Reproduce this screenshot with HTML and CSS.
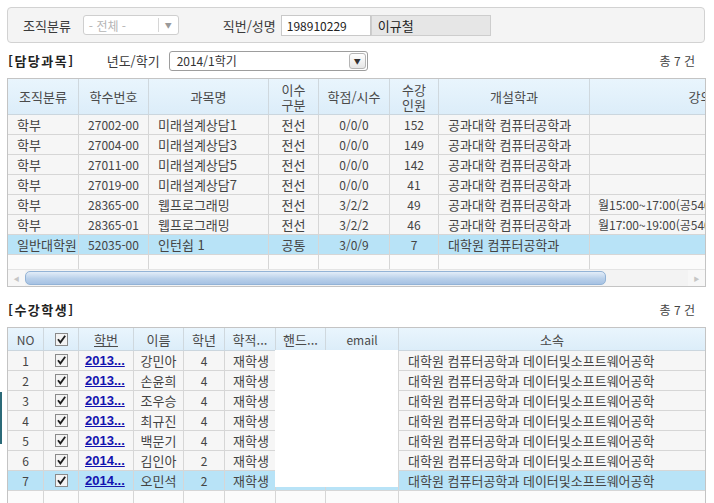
FILE: index.html
```html
<!DOCTYPE html>
<html lang="ko">
<head>
<meta charset="utf-8">
<link rel="stylesheet" href="styles.css">
</head>
<body>
<div class="edge-mark"></div>

<div class="search-panel">
  <span class="lbl">조직분류</span>
  <div class="sel sel-disabled"><span class="sel-text">- 전체 -</span><span class="sel-arrow">▼</span></div>
  <span class="lbl lbl-emp">직번/성명</span>
  <div class="inp">198910229</div>
  <div class="inp inp-name">이규철</div>
</div>

<div class="sec-bar">
  <span class="sec-title">[담당과목]</span>
  <span class="lbl lbl-year">년도/학기</span>
  <div class="sel sel-year"><span class="sel-text">2014/1학기</span><span class="sel-btn">▼</span></div>
  <span class="total">총 7 건</span>
</div>

<div class="grid grid1">
  <div class="clip">
    <div class="row head">
      <div class="c c1">조직분류</div>
      <div class="c c2">학수번호</div>
      <div class="c c3">과목명</div>
      <div class="c c4">이수<br>구분</div>
      <div class="c c5">학점/시수</div>
      <div class="c c6">수강<br>인원</div>
      <div class="c c7">개설학과</div>
      <div class="c c8">강의시간</div>
    </div>
    <div class="row">
      <div class="c c1 l">학부</div><div class="c c2 num">27002-00</div><div class="c c3 l">미래설계상담1</div><div class="c c4">전선</div><div class="c c5 num">0/0/0</div><div class="c c6 num">152</div><div class="c c7 l">공과대학 컴퓨터공학과</div><div class="c c8 l"></div>
    </div>
    <div class="row">
      <div class="c c1 l">학부</div><div class="c c2 num">27004-00</div><div class="c c3 l">미래설계상담3</div><div class="c c4">전선</div><div class="c c5 num">0/0/0</div><div class="c c6 num">149</div><div class="c c7 l">공과대학 컴퓨터공학과</div><div class="c c8 l"></div>
    </div>
    <div class="row">
      <div class="c c1 l">학부</div><div class="c c2 num">27011-00</div><div class="c c3 l">미래설계상담5</div><div class="c c4">전선</div><div class="c c5 num">0/0/0</div><div class="c c6 num">142</div><div class="c c7 l">공과대학 컴퓨터공학과</div><div class="c c8 l"></div>
    </div>
    <div class="row">
      <div class="c c1 l">학부</div><div class="c c2 num">27019-00</div><div class="c c3 l">미래설계상담7</div><div class="c c4">전선</div><div class="c c5 num">0/0/0</div><div class="c c6 num">41</div><div class="c c7 l">공과대학 컴퓨터공학과</div><div class="c c8 l"></div>
    </div>
    <div class="row">
      <div class="c c1 l">학부</div><div class="c c2 num">28365-00</div><div class="c c3 l">웹프로그래밍</div><div class="c c4">전선</div><div class="c c5 num">3/2/2</div><div class="c c6 num">49</div><div class="c c7 l">공과대학 컴퓨터공학과</div><div class="c c8 l">월15:00~17:00(공540</div>
    </div>
    <div class="row">
      <div class="c c1 l">학부</div><div class="c c2 num">28365-01</div><div class="c c3 l">웹프로그래밍</div><div class="c c4">전선</div><div class="c c5 num">3/2/2</div><div class="c c6 num">46</div><div class="c c7 l">공과대학 컴퓨터공학과</div><div class="c c8 l">월17:00~19:00(공540</div>
    </div>
    <div class="row sel-row">
      <div class="c c1 l">일반대학원</div><div class="c c2 num">52035-00</div><div class="c c3 l">인턴쉽 1</div><div class="c c4">공통</div><div class="c c5 num">3/0/9</div><div class="c c6 num">7</div><div class="c c7 l">대학원 컴퓨터공학과</div><div class="c c8 l"></div>
    </div>
    <div class="row empty">
      <div class="c c1"></div><div class="c c2"></div><div class="c c3"></div><div class="c c4"></div><div class="c c5"></div><div class="c c6"></div><div class="c c7"></div><div class="c c8"></div>
    </div>
  </div>
  <div class="hscroll">
    <div class="sb-btn">&#9664;</div>
    <div class="sb-thumb"></div>
    <div class="sb-track"></div>
    <div class="sb-btn">&#9654;</div>
  </div>
</div>

<div class="sec-bar sec-bar2">
  <span class="sec-title">[수강학생]</span>
  <span class="total">총 7 건</span>
</div>

<div class="grid grid2">
  <div class="row head">
    <div class="c d1 num">NO</div>
    <div class="c d2"><svg class="chk" width="13" height="13" viewBox="0 0 13 13"><rect x="0.5" y="0.5" width="12" height="12" fill="#f3f3f3" stroke="#8a8a8a"/><path d="M3 6.3 L5.4 9.4 L10.2 2.8" fill="none" stroke="#1e1e1e" stroke-width="1.8"/></svg></div>
    <div class="c d3"><span class="ul">학번</span></div>
    <div class="c d4">이름</div>
    <div class="c d5">학년</div>
    <div class="c d6">학적...</div>
    <div class="c d7">핸드...</div>
    <div class="c d8 num">email</div>
    <div class="c d9">소속</div>
  </div>
  <div class="row">
    <div class="c d1 num">1</div><div class="c d2"><svg class="chk" width="13" height="13" viewBox="0 0 13 13"><rect x="0.5" y="0.5" width="12" height="12" fill="#f3f3f3" stroke="#8a8a8a"/><path d="M3 6.3 L5.4 9.4 L10.2 2.8" fill="none" stroke="#1e1e1e" stroke-width="1.8"/></svg></div><div class="c d3 l"><span class="link">2013...</span></div><div class="c d4">강민아</div><div class="c d5 num">4</div><div class="c d6 l">재학생</div><div class="c d7"></div><div class="c d8"></div><div class="c d9 l">대학원 컴퓨터공학과 데이터및소프트웨어공학</div>
  </div>
  <div class="row">
    <div class="c d1 num">2</div><div class="c d2"><svg class="chk" width="13" height="13" viewBox="0 0 13 13"><rect x="0.5" y="0.5" width="12" height="12" fill="#f3f3f3" stroke="#8a8a8a"/><path d="M3 6.3 L5.4 9.4 L10.2 2.8" fill="none" stroke="#1e1e1e" stroke-width="1.8"/></svg></div><div class="c d3 l"><span class="link">2013...</span></div><div class="c d4">손윤희</div><div class="c d5 num">4</div><div class="c d6 l">재학생</div><div class="c d7"></div><div class="c d8"></div><div class="c d9 l">대학원 컴퓨터공학과 데이터및소프트웨어공학</div>
  </div>
  <div class="row">
    <div class="c d1 num">3</div><div class="c d2"><svg class="chk" width="13" height="13" viewBox="0 0 13 13"><rect x="0.5" y="0.5" width="12" height="12" fill="#f3f3f3" stroke="#8a8a8a"/><path d="M3 6.3 L5.4 9.4 L10.2 2.8" fill="none" stroke="#1e1e1e" stroke-width="1.8"/></svg></div><div class="c d3 l"><span class="link">2013...</span></div><div class="c d4">조우승</div><div class="c d5 num">4</div><div class="c d6 l">재학생</div><div class="c d7"></div><div class="c d8"></div><div class="c d9 l">대학원 컴퓨터공학과 데이터및소프트웨어공학</div>
  </div>
  <div class="row">
    <div class="c d1 num">4</div><div class="c d2"><svg class="chk" width="13" height="13" viewBox="0 0 13 13"><rect x="0.5" y="0.5" width="12" height="12" fill="#f3f3f3" stroke="#8a8a8a"/><path d="M3 6.3 L5.4 9.4 L10.2 2.8" fill="none" stroke="#1e1e1e" stroke-width="1.8"/></svg></div><div class="c d3 l"><span class="link">2013...</span></div><div class="c d4">최규진</div><div class="c d5 num">4</div><div class="c d6 l">재학생</div><div class="c d7"></div><div class="c d8"></div><div class="c d9 l">대학원 컴퓨터공학과 데이터및소프트웨어공학</div>
  </div>
  <div class="row">
    <div class="c d1 num">5</div><div class="c d2"><svg class="chk" width="13" height="13" viewBox="0 0 13 13"><rect x="0.5" y="0.5" width="12" height="12" fill="#f3f3f3" stroke="#8a8a8a"/><path d="M3 6.3 L5.4 9.4 L10.2 2.8" fill="none" stroke="#1e1e1e" stroke-width="1.8"/></svg></div><div class="c d3 l"><span class="link">2013...</span></div><div class="c d4">백문기</div><div class="c d5 num">4</div><div class="c d6 l">재학생</div><div class="c d7"></div><div class="c d8"></div><div class="c d9 l">대학원 컴퓨터공학과 데이터및소프트웨어공학</div>
  </div>
  <div class="row">
    <div class="c d1 num">6</div><div class="c d2"><svg class="chk" width="13" height="13" viewBox="0 0 13 13"><rect x="0.5" y="0.5" width="12" height="12" fill="#f3f3f3" stroke="#8a8a8a"/><path d="M3 6.3 L5.4 9.4 L10.2 2.8" fill="none" stroke="#1e1e1e" stroke-width="1.8"/></svg></div><div class="c d3 l"><span class="link">2014...</span></div><div class="c d4">김인아</div><div class="c d5 num">2</div><div class="c d6 l">재학생</div><div class="c d7"></div><div class="c d8"></div><div class="c d9 l">대학원 컴퓨터공학과 데이터및소프트웨어공학</div>
  </div>
  <div class="row sel-row">
    <div class="c d1 num">7</div><div class="c d2"><svg class="chk" width="13" height="13" viewBox="0 0 13 13"><rect x="0.5" y="0.5" width="12" height="12" fill="#f3f3f3" stroke="#8a8a8a"/><path d="M3 6.3 L5.4 9.4 L10.2 2.8" fill="none" stroke="#1e1e1e" stroke-width="1.8"/></svg></div><div class="c d3 l"><span class="link">2014...</span></div><div class="c d4">오민석</div><div class="c d5 num">2</div><div class="c d6 l">재학생</div><div class="c d7"></div><div class="c d8"></div><div class="c d9 l">대학원 컴퓨터공학과 데이터및소프트웨어공학</div>
  </div>
  <div class="row empty">
    <div class="c d1"></div><div class="c d2"></div><div class="c d3"></div><div class="c d4"></div><div class="c d5"></div><div class="c d6"></div><div class="c d7"></div><div class="c d8"></div><div class="c d9"></div>
  </div>
  <div class="mask"></div>
</div>
</body>
</html>
```

FILE: styles.css
```css
html, body {
  margin: 0;
  padding: 0;
}
body {
  width: 714px;
  height: 503px;
  overflow: hidden;
  position: relative;
  background: #ffffff;
  font-family: "Noto Sans CJK KR", "Liberation Sans", sans-serif;
  font-size: 13px;
  color: #444444;
}

.edge-mark {
  position: absolute;
  left: 0;
  top: 392px;
  width: 2px;
  height: 52px;
  background: #2b6a78;
}

/* top search panel */
.search-panel {
  margin: 7px 9px 0 7px;
  height: 36px;
  box-sizing: border-box;
  border: 1px solid #d2d2d2;
  border-radius: 4px;
  background: #f4f4f4;
  display: flex;
  align-items: center;
  padding-left: 15px;
}
.lbl {
  color: #3a3a3a;
  white-space: nowrap;
}
.sel {
  box-sizing: border-box;
  height: 20px;
  display: flex;
  align-items: center;
  background: #ffffff;
  border-radius: 3px;
  font-size: 12px;
}
.sel-disabled {
  margin-left: 12px;
  width: 96px;
  border: 1px solid #cfcfcf;
  color: #b4b4b4;
}
.sel-disabled .sel-text {
  flex: 1;
  padding-left: 5px;
}
.sel-arrow {
  width: 19px;
  height: 14px;
  border-left: 1px solid #d6d6d6;
  font-size: 7px;
  color: #9a9a9a;
  display: flex;
  align-items: center;
  justify-content: center;
}
.lbl-emp {
  margin-left: 44px;
}
.inp {
  box-sizing: border-box;
  height: 21px;
  margin-left: 5px;
  width: 90px;
  border: 1px solid #c9c9c9;
  background: #ffffff;
  padding-left: 5px;
  line-height: 19px;
  font-size: 12px;
  color: #222;
}
.inp-name {
  margin-left: 0;
  width: 120px;
  background: #e6e6e6;
  border-color: #cdcdcd;
  padding-left: 6px;
  font-size: 13px;
}

/* section bars */
.sec-bar {
  display: flex;
  align-items: center;
  height: 25px;
  margin: 5px 0 0 8px;
  padding-right: 19px;
}
.sec-title {
  font-weight: bold;
  font-size: 13px;
  letter-spacing: 1.5px;
  color: #222;
}
.lbl-year {
  margin-left: 32px;
}
.sel-year {
  margin-left: 9px;
  width: 199px;
  border: 1px solid #9d9d9d;
  color: #333;
}
.sel-year .sel-text {
  flex: 1;
  padding-left: 7px;
}
.sel-btn {
  box-sizing: border-box;
  width: 17px;
  height: 16px;
  margin-right: 1px;
  border: 1px solid #b5b5b5;
  border-radius: 3px;
  background: linear-gradient(#ffffff, #e6e6e6);
  font-size: 7px;
  color: #333;
  display: flex;
  align-items: center;
  justify-content: center;
}
.total {
  margin-left: auto;
  color: #444;
  font-size: 12px;
}
.sec-bar2 {
  margin-top: 10px;
  height: 24px;
}

/* grids */
.grid {
  position: relative;
  box-sizing: border-box;
  width: 699px;
  margin-left: 7px;
  border: 1px solid #c4c4c4;
  overflow: hidden;
}
.grid1 {
  margin-top: 5px;
}
.grid2 {
  margin-top: 6px;
  border-bottom: none;
}
.clip {
  overflow: hidden;
}
.row {
  display: flex;
  box-sizing: border-box;
  height: 20px;
  border-bottom: 1px solid #d6d6d6;
  background: #f6f6f6;
}
.grid1 .row {
  width: 828px;
}
.row.head {
  height: 36px;
  background: linear-gradient(#e9f5fd, #dcedf9);
  border-bottom-color: #cbd6de;
  color: #4a4a4a;
  line-height: 15px;
}
.grid2 .row.head {
  height: 23px;
}
.row.sel-row {
  background: #b8e3f7;
}
.row.empty {
  height: 14px;
  background: #fbfbfb;
  border-bottom: none;
}
.grid2 .row.empty {
  height: 20px;
}
.c {
  box-sizing: border-box;
  flex: none;
  border-right: 1px solid #d6d6d6;
  display: flex;
  align-items: center;
  justify-content: center;
  white-space: nowrap;
  overflow: hidden;
  text-align: center;
}
.c.num {
  font-size: 12px;
}
.head .c {
  border-right-color: #cfd8de;
}
.c.l {
  justify-content: flex-start;
  padding-left: 9px;
}

.c1 { width: 71px; }
.c1.l { padding-left: 9px; }
.c2 { width: 70px; }
.c3 { width: 120px; }
.c4 { width: 50px; }
.c5 { width: 71px; }
.c6 { width: 49px; }
.c7 { width: 151px; }
.c8 { width: 246px; }
.c8.l { padding-left: 8px; font-size: 12px; }

.d1 { width: 36px; }
.d2 { width: 35px; }
.d3 { width: 55px; }
.d3.l { padding-left: 6px; }
.d4 { width: 50px; }
.d5 { width: 41px; }
.d6 { width: 51px; }
.d6.l { padding-left: 8px; }
.d7 { width: 50px; }
.d8 { width: 73px; }
.d9 { width: 306px; border-right: none; }
.d9.l { padding-left: 9px; }

.ul {
  text-decoration: underline;
}
.link {
  color: #1212b0;
  font-family: "Liberation Sans", sans-serif;
  font-weight: bold;
  font-size: 13px;
  text-decoration: underline;
}
.chk {
  display: block;
}

.mask {
  position: absolute;
  left: 267px;
  top: 22px;
  width: 123px;
  height: 137px;
  background: #ffffff;
}

/* horizontal scrollbar */
.hscroll {
  display: flex;
  height: 17px;
  background: #f3f3f3;
  border-top: 1px solid #e4e4e4;
  box-sizing: border-box;
}
.sb-btn {
  width: 17px;
  flex: none;
  display: flex;
  align-items: center;
  justify-content: center;
  font-size: 6px;
  color: #c6c6c6;
  background: #f7f7f7;
}
.sb-thumb {
  width: 581px;
  flex: none;
  box-sizing: border-box;
  margin: 1px 0;
  border: 1px solid #93b3d6;
  border-radius: 5px;
  background: linear-gradient(#e3edf8, #b9d0ea 55%, #a6c2e3);
}
.sb-track {
  flex: 1;
}
```
